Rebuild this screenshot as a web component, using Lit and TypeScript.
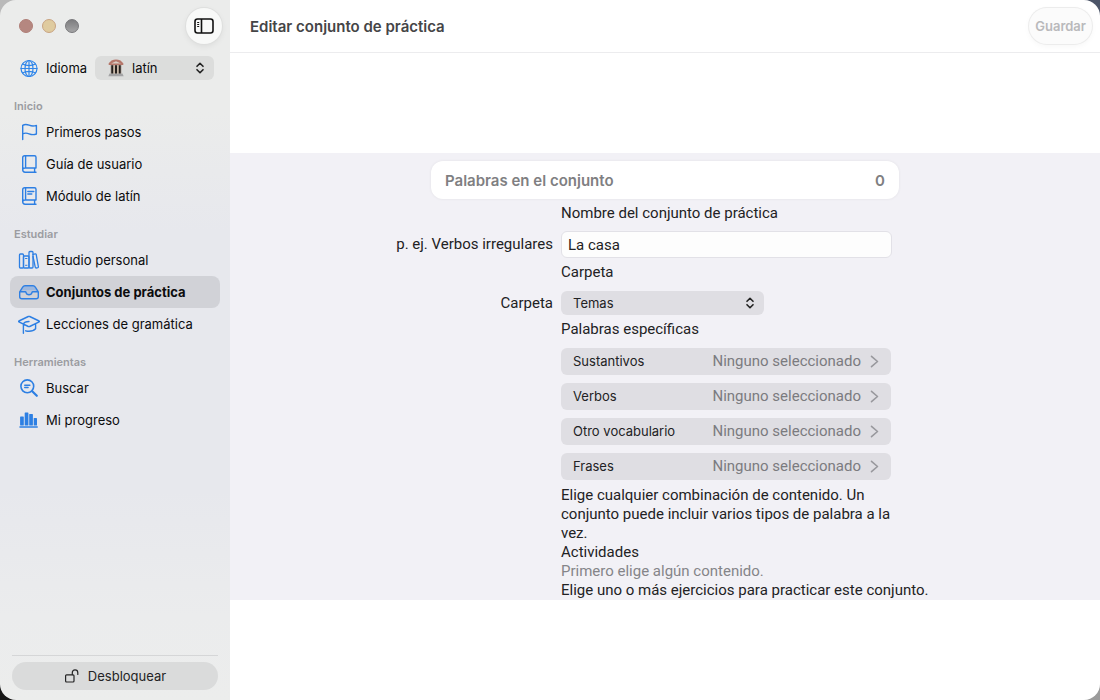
import { LitElement, html, css, svg, TemplateResult } from "lit";
import { customElement, property, state } from "lit/decorators.js";
import { classMap } from "lit/directives/class-map.js";

const bookOutline = svg`<path d="M18 15V4.200c0-.9-.6-1.500-1.500-1.500H6.800C5.500 2.700 4.700 3.500 4.700 4.800v12c0 1.500.9 2.400 2.400 2.400H18M18 15H7.100c-1.500 0-2.400.8-2.400 2M7.600 2.900V15M16.600 15v4.200"/>`;

const icons: Record<string, TemplateResult> = {
  globe: svg`<g stroke-width="1.2"><circle cx="11" cy="11.500" r="8"/><ellipse cx="11" cy="11.500" rx="4" ry="8"/><path d="M11 3.500v16M3 11.500h16M4.600 7.100c3.600 2 9.200 2 12.800 0M4.600 15.900c3.600-2 9.200-2 12.800 0"/></g>`,
  flag: svg`<path d="M4.700 18.600V4.400c2-1.300 4-1.200 6.400-.2 2.600 1.100 4.700 1.200 7.300.2v8.600c-2.600 1-4.700.9-7.300-.2-2.400-1-4.400-1-6.400.1"/>`,
  book: bookOutline,
  bookText: svg`${bookOutline}<path d="M9.800 6.500h6M9.800 9h4"/>`,
  books: svg`<g stroke-width="1.3"><rect x="1.500" y="5" width="4" height="14" rx=".9"/><rect x="5.500" y="7" width="5.500" height="12" rx=".9"/><rect x="11" y="2.500" width="4" height="16.500" rx=".9"/><path d="M15 5.400l2.400-.6c.4 0 .7.200.8.6l2.200 12.400c0 .5-.1.700-.5.8l-1.800.4c-.4 0-.7-.2-.8-.6L15 7.500"/><path stroke-width="1" d="M7.500 9.500h1.500M7.500 16.300h1.500"/></g>`,
  tray: svg`<path fill="#9db7dd" stroke="none" d="M2.500 10.500l3.300-5.200h10.400l3.300 5.200-4.600.2-1.600 2.800h-4.600l-1.600-2.800z"/><path fill="#d1d2d7" stroke="none" d="M4.500 9.200h13l1 1.600h-4.300l-.8 2h-4.800l-.8-2H3.500z" opacity=".5"/><path d="M1.700 10.800l3-4.700c.6-.9 1.300-1.300 2.300-1.300h8c1 0 1.700.4 2.300 1.300l3 4.700v5c0 1.300-.8 2-2.100 2H3.800c-1.300 0-2.100-.7-2.100-2zM1.800 10.700h5.300c.6 0 .9.400 1 .9.300 1.300 1.400 2.200 2.900 2.200s2.600-.9 2.900-2.200c.1-.5.400-.9 1-.9h5.300"/>`,
  cap: svg`<path d="M.9 8l9.400-4.500c.5-.2 1-.2 1.400 0L21.100 8c.5.300.5.700 0 .9l-9.400 4.600c-.4.200-.9.200-1.400 0L.9 8.900c-.5-.2-.5-.6 0-.9zM5.400 11.200v9M5.400 11.200c.6-1.700 3-2.700 5.600-2.700M17.600 11v4.800c-1.600 1.800-4 2.500-6.600 2.500-1.300 0-2.400-.2-3.300-.5"/>`,
  search: svg`<circle cx="9.300" cy="9.300" r="6.400" stroke-width="1.6"/><path stroke-width="2.200" d="M14.200 14.200l4.600 4.600"/><path d="M6.700 8.200h5.200M6.700 10.500h3.400"/>`,
  chart: svg`<g fill="currentColor" stroke="none"><rect x="2.100" y="7.500" width="3.700" height="9" rx=".6"/><rect x="6.700" y="3.500" width="3.700" height="13" rx=".6"/><rect x="11.200" y="5" width="3.700" height="11.500" rx=".6"/><rect x="15.700" y="9" width="3.300" height="7.500" rx=".6"/><rect x="1.300" y="17.300" width="18.600" height="1.400" rx=".6"/></g>`,
};

@customElement("ui-icon")
export class UiIcon extends LitElement {
  @property() name = "";
  static styles = css`
    :host { display: block; width: 22px; height: 22px; flex: none; }
    svg { display: block; width: 22px; height: 22px; fill: none; stroke: currentColor; stroke-width: 1.4; stroke-linecap: round; stroke-linejoin: round; }
  `;
  render() {
    return html`<svg viewBox="0 0 22 22" aria-hidden="true">${icons[this.name]}</svg>`;
  }
}

const chevrons = html`<svg class="chevrons" viewBox="0 0 8 12" aria-hidden="true"><path d="M1 4.300L4 1.300l3 3M1 7.700l3 3 3-3" /></svg>`;

const controlStyles = css`
  * { box-sizing: border-box; }
  button, input, select { font: inherit; color: inherit; margin: 0; }
  button { border: 0; cursor: default; }
  .popup { display: grid; align-items: center; height: 24px; }
  .popup > * { grid-area: 1 / 1; }
  .popup select { appearance: none; width: 100%; height: 24px; border: 0; border-radius: 6px; font-family: Inter, "Liberation Sans", sans-serif; font-size: 13px; }
  .chevrons { width: 8px; height: 12px; justify-self: end; margin-right: 10px; fill: none; stroke: #222; stroke-width: 1.6; stroke-linecap: round; stroke-linejoin: round; pointer-events: none; }
`;

const sections = [
  { title: "Inicio", items: [["flag", "Primeros pasos"], ["book", "Guía de usuario"], ["bookText", "Módulo de latín"]] },
  { title: "Estudiar", items: [["books", "Estudio personal"], ["tray", "Conjuntos de práctica"], ["cap", "Lecciones de gramática"]] },
  { title: "Herramientas", items: [["search", "Buscar"], ["chart", "Mi progreso"]] },
];

@customElement("side-bar")
export class SideBar extends LitElement {
  @state() private current = "Conjuntos de práctica";
  static styles = [controlStyles, css`
    :host { display: flex; flex-direction: column; color: #0c0c0d; font-size: 13px; line-height: 20px; background: linear-gradient(#ebeceb 0, #ebeceb 16%, #e7e8ed 33%, #e7e8ed 70%, #ebeced 88%, #ecedec 100%); }
    .top { display: flex; align-items: center; height: 52px; padding: 0 8px 0 19px; gap: 9px; }
    .light { width: 14px; height: 14px; border-radius: 50%; flex: none; border: 1px solid #b07f78; background: #b58780; }
    .light.mid { background: #dfcb9f; border-color: #c9a482; }
    .light.end { background: linear-gradient(#7d7d7f, #a5a5a6); border-color: #77777a; }
    .toggle { display: grid; place-items: center; width: 36px; height: 36px; padding: 0; margin-left: auto; border-radius: 50%; background: #f8f9f8; box-shadow: 0 0 0 1px #dedfde, 0 2px 6px #00000012; }
    .toggle svg { width: 20px; height: 16px; fill: none; stroke: #111; stroke-width: 1.6; }
    .lang { display: flex; align-items: center; height: 32px; padding: 0 16px 0 18px; }
    .lang ui-icon { color: #2f86ea; margin-right: 6px; }
    .lang label { margin-right: auto; }
    .lang .popup { width: 119px; }
    .lang select { background: #dcdddc; padding: 0 24px 0 37px; }
    .temple { width: 16px; height: 18px; margin-left: 13px; pointer-events: none; }
    nav { flex: 1; padding: 0 10px; }
    h2 { margin: 12px 0 0; padding-left: 4px; font-size: 11px; line-height: 20px; font-weight: 600; color: #9b9ca1; }
    ul { list-style: none; margin: 0; padding: 0; }
    a { display: flex; align-items: center; gap: 6px; height: 32px; padding: 0 8px; border-radius: 8px; color: inherit; text-decoration: none; }
    a ui-icon { color: #2d7fe3; }
    a.on { background: #d1d2d7; font-weight: 700; }
    .foot { margin: 0 12px; padding: 6px 0 10px; border-top: 1px solid #d5d6d7; }
    .unlock { display: flex; align-items: center; justify-content: center; gap: 8px; width: 100%; height: 28px; padding: 0; border-radius: 14px; background: #dadbdb; color: #242425; }
    .unlock svg { width: 16px; height: 16px; fill: none; stroke: currentColor; stroke-width: 1.2; stroke-linecap: round; }
  `];
  render() {
    return html`
      <div class="top">
        <span class="light"></span><span class="light mid"></span><span class="light end"></span>
        <button class="toggle" aria-label="Barra lateral">
          <svg viewBox="0 0 20 16"><rect x="1" y="1" width="18" height="14" rx="2.500"/><path d="M7.500 1v14"/><path stroke-width="1" d="M3.200 4.500h2M3.200 6.500h2M3.200 8.500h2"/></svg>
        </button>
      </div>
      <div class="lang">
        <ui-icon name="globe"></ui-icon>
        <label for="lang">Idioma</label>
        <div class="popup">
          <select id="lang"><option>latín</option></select>
          <svg class="temple" viewBox="0 0 16 18" aria-hidden="true">
            <path fill="#a3a3a5" d="M1.500 14.500h13l1.200 2.700H.3z"/>
            <path fill="#b0a59c" d="M2.500 5.500h11V14.500h-11z"/>
            <path fill="#241f1d" d="M3.300 6.300h2v8.200h-2zM7 6.300h2v8.200H7zM10.700 6.300h2v8.200h-2z"/>
            <path fill="#d9c3ae" d="M5.600 6.300h1v8.200h-1zM9.400 6.300h1v8.200h-1z"/>
            <path fill="#b5776b" d="M3.500 1.600Q8-.4 12.500 1.600L15.300 4.300v1.700H.7V4.300z"/>
            <path fill="#d8cdc4" d="M8 2.200l5 2.400H3z"/>
          </svg>
          ${chevrons}
        </div>
      </div>
      <nav>
        ${sections.map((s) => html`
          <h2>${s.title}</h2>
          <ul>${s.items.map(([icon, label]) => html`
            <li><a href="#" class=${classMap({ on: this.current === label })} @click=${(e: Event) => { e.preventDefault(); this.current = label; }}>
              <ui-icon name=${icon}></ui-icon><span>${label}</span></a></li>`)}
          </ul>`)}
      </nav>
      <div class="foot">
        <button class="unlock">
          <svg viewBox="0 0 16 16" aria-hidden="true"><rect x="1.600" y="6.800" width="8.400" height="7.200" rx="1"/><path d="M8.300 6.600V4.700C8.300 3 9.400 1.900 11 1.900s2.800 1.100 2.800 2.800v1.700"/></svg>
          <span>Desbloquear</span>
        </button>
      </div>`;
  }
}

@customElement("set-editor")
export class SetEditor extends LitElement {
  @state() private setName = "La casa";
  static styles = [controlStyles, css`
    :host { display: flex; flex-direction: column; min-width: 0; background: #fff; color: #222224; font-size: 15px; line-height: 19px; }
    header { display: flex; align-items: center; justify-content: space-between; height: 53px; padding: 0 8px 0 20px; border-bottom: 1px solid #ececee; }
    h1 { margin: 0; font-size: 15px; font-weight: 600; color: #454547; }
    .save { height: 36px; padding: 0 6px; border-radius: 18px; font-size: 13px; font-weight: 600; color: #b9b9bb; background: #fbfbfb; box-shadow: 0 0 0 1px #ececec, 0 2px 6px #0000000a; }
    main { flex: 1; display: flex; flex-direction: column; justify-content: center; }
    .band { padding-top: 8px; background: #f2f1f6; }
    .summary { display: flex; align-items: center; justify-content: space-between; width: 468px; max-width: 100%; height: 38px; margin: 0 auto 5px; padding: 0 14px; border-radius: 12px; background: #fff; box-shadow: 0 0 3px #00000012; font-weight: 600; color: #7f7f82; }
    form { display: grid; grid-template-columns: 162px 378px; column-gap: 8px; justify-content: center; align-items: center; font-family: Roboto, "Liberation Sans", sans-serif; }
    form > * { grid-column: 2; }
    p, h2 { margin: 0; font-size: inherit; font-weight: 400; }
    .side { grid-column: 1; text-align: right; white-space: nowrap; }
    .text { width: 331px; height: 27px; margin: 8px 0 5px; padding: 0 6px; border: 1px solid #e2e1e7; border-radius: 6px; background: #fdfdfd; outline: none; }
    .side.name { margin: 8px 0 5px; }
    .folder { width: 203px; margin: 9px 0 5px; }
    .side.dir { margin: 9px 0 5px; }
    .folder select { padding: 0 24px 0 12px; background: #dfdee3; }
    .rows { display: flex; flex-direction: column; gap: 8px; width: 330px; margin: 9px 0 6px; }
    .row { display: flex; align-items: center; justify-content: space-between; height: 27px; padding: 0 12px; border-radius: 6px; background: #dfdee3; }
    .kind { font-family: Inter, "Liberation Sans", sans-serif; font-size: 13px; }
    .value { display: flex; align-items: center; gap: 9px; color: #7b7b7f; }
    .value svg { width: 9px; height: 13px; fill: none; stroke: #98989d; stroke-width: 1.6; stroke-linecap: round; stroke-linejoin: round; }
    .hint { max-width: 345px; }
    .muted { color: #858589; }
    .line { white-space: nowrap; }
  `];
  render() {
    const kinds = ["Sustantivos", "Verbos", "Otro vocabulario", "Frases"];
    return html`
      <header><h1>Editar conjunto de práctica</h1><button class="save" disabled>Guardar</button></header>
      <main>
        <div class="band">
          <div class="summary"><span>Palabras en el conjunto</span><span>0</span></div>
          <form @submit=${(e: Event) => e.preventDefault()}>
            <h2>Nombre del conjunto de práctica</h2>
            <label class="side name" for="name">p. ej. Verbos irregulares</label>
            <input class="text" id="name" type="text" .value=${this.setName} @input=${(e: Event) => (this.setName = (e.target as HTMLInputElement).value)} />
            <h2>Carpeta</h2>
            <label class="side dir" for="folder">Carpeta</label>
            <div class="popup folder"><select id="folder"><option>Temas</option></select>${chevrons}</div>
            <h2>Palabras específicas</h2>
            <div class="rows">${kinds.map((k) => html`
              <button type="button" class="row"><span class="kind">${k}</span>
                <span class="value">Ninguno seleccionado<svg viewBox="0 0 9 13" aria-hidden="true"><path d="M1.500 1.300L7.500 6.500l-6 5.200"/></svg></span>
              </button>`)}
            </div>
            <p class="hint">Elige cualquier combinación de contenido. Un conjunto puede incluir varios tipos de palabra a la vez.</p>
            <h2>Actividades</h2>
            <p class="muted">Primero elige algún contenido.</p>
            <p class="line">Elige uno o más ejercicios para practicar este conjunto.</p>
          </form>
        </div>
      </main>`;
  }
}

@customElement("app-root")
export class AppRoot extends LitElement {
  static styles = css`
    :host { display: block; min-height: 100vh; font-family: Inter, "Liberation Sans", sans-serif; background: conic-gradient(#4c5568 0 25%, #9b9b9b 0 50%, #161616 0 75%, #b9b9b9 0); }
    .window { display: grid; grid-template-columns: 230px minmax(0, 1fr); min-height: 100vh; border-radius: 16px; overflow: hidden; }
  `;
  render() {
    return html`<div class="window"><side-bar></side-bar><set-editor></set-editor></div>`;
  }
}
